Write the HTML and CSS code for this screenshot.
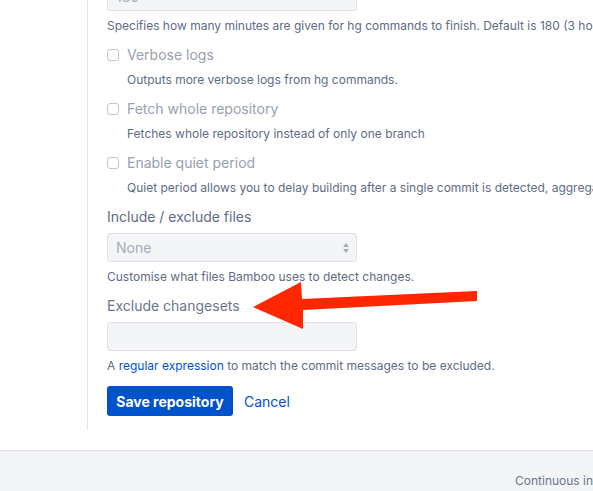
FILE: index.html
```html
<!DOCTYPE html>
<html>
<head>
<meta charset="utf-8">
<link rel="stylesheet" href="styles.css">
</head>
<body>
<div class="page">
  <div class="sidebar"></div>
  <main class="content">
    <div class="field">
      <input class="text-input" type="text" value="180">
      <p class="help">Specifies how many minutes are given for hg commands to finish. Default is 180 (3 hours).</p>
    </div>
    <div class="check-row">
      <label class="check-label"><span class="checkbox"></span>Verbose logs</label>
      <p class="help indent">Outputs more verbose logs from hg commands.</p>
    </div>
    <div class="check-row">
      <label class="check-label"><span class="checkbox"></span>Fetch whole repository</label>
      <p class="help indent">Fetches whole repository instead of only one branch</p>
    </div>
    <div class="check-row">
      <label class="check-label"><span class="checkbox"></span>Enable quiet period</label>
      <p class="help indent">Quiet period allows you to delay building after a single commit is detected, aggregating multiple commits per build.</p>
    </div>
    <div class="field spaced">
      <label class="field-label dark">Include / exclude files</label>
      <div class="select">
        <span>None</span>
        <svg class="select-arrows" width="8" height="12" viewBox="0 0 8 12"><path d="M4 1 L7 5 L1 5 Z" fill="#a5adba"/><path d="M4 11 L7 7 L1 7 Z" fill="#a5adba"/></svg>
      </div>
      <p class="help">Customise what files Bamboo uses to detect changes.</p>
    </div>
    <div class="field spaced">
      <label class="field-label">Exclude changesets</label>
      <div class="text-box"></div>
      <p class="help">A <a class="link" href="#">regular expression</a> to match the commit messages to be excluded.</p>
    </div>
    <div class="buttons">
      <button class="btn-primary">Save repository</button>
      <a class="cancel" href="#">Cancel</a>
    </div>
  </main>
</div>
<footer class="footer">
  <span>Continuous integration powered by Atlassian Bamboo</span>
</footer>
<svg class="arrow" width="593" height="491" viewBox="0 0 593 491">
  <polygon points="253,307 301,282 302,299 477,291 477,301 303,310 303,329" fill="#ff2600"/>
</svg>
</body>
</html>
```

FILE: styles.css
```css
* { box-sizing: border-box; }
html, body { margin: 0; padding: 0; background: #fff; }
body {
  font-family: Inter, "Liberation Sans", Arial, sans-serif;
  color: #172b4d;
  width: 593px;
  height: 491px;
  overflow: hidden;
  position: relative;
}
.page {
  display: flex;
  margin-top: -18px;
}
.sidebar { width: 87px; flex: none; }
.content {
  border-left: 1px solid #e4e6ea;
  padding: 0 0 14px 19px;
  flex: 1;
  min-width: 0;
}
.field { display: flex; flex-direction: column; }
.spaced { margin-top: 11px; }
.text-input {
  width: 250px;
  height: 29px;
  border: 1px solid #dfe1e6;
  border-radius: 3px;
  background: #f4f5f7;
  font: 14px Inter, "Liberation Sans", Arial, sans-serif;
  color: #a5adba;
  padding: 0 8px;
  margin: 0;
}
.help {
  margin: 7px 0 0;
  font-size: 12px;
  line-height: 16px;
  color: #5e6c84;
  white-space: nowrap;
}
.indent { margin-left: 20px; }
.check-row { margin-top: 11px; }
.check-label {
  display: flex;
  align-items: center;
  font-size: 14px;
  line-height: 20px;
  color: #97a0af;
}
.checkbox {
  width: 12px;
  height: 12px;
  border: 1px solid #c1c7d0;
  border-radius: 3px;
  background: #fff;
  margin-right: 8px;
  flex: none;
}
.field-label {
  font-size: 14px;
  line-height: 20px;
  color: #6b778c;
}
.field-label.dark { color: #5e6c84; }
.select, .text-box {
  margin-top: 6px;
  width: 250px;
  height: 29px;
  border: 1px solid #dfe1e6;
  border-radius: 3px;
  background: #f4f5f7;
}
.select {
  display: flex;
  align-items: center;
  justify-content: space-between;
  padding: 0 6px 0 8px;
  font-size: 14px;
  color: #a5adba;
}
.text-box { width: 250px; }
.link { color: #0052cc; text-decoration: none; }
.buttons {
  display: flex;
  align-items: center;
  margin-top: 12px;
}
.btn-primary {
  height: 30px;
  width: 126px;
  border: 0;
  border-radius: 3px;
  background: #0052cc;
  color: #fff;
  font: bold 14px Inter, "Liberation Sans", Arial, sans-serif;
  padding: 0;
}
.cancel {
  margin-left: 11px;
  color: #0052cc;
  font-size: 14px;
  text-decoration: none;
}
.footer {
  margin-top: 20px;
  border-top: 1px solid #dfe1e6;
  background: #f4f5f7;
  height: 60px;
  padding: 22px 0 0 515px;
  font-size: 12px;
  line-height: 16px;
  color: #6b778c;
  white-space: nowrap;
  overflow: hidden;
}
.arrow {
  position: absolute;
  left: 0;
  top: 0;
  pointer-events: none;
}
```
